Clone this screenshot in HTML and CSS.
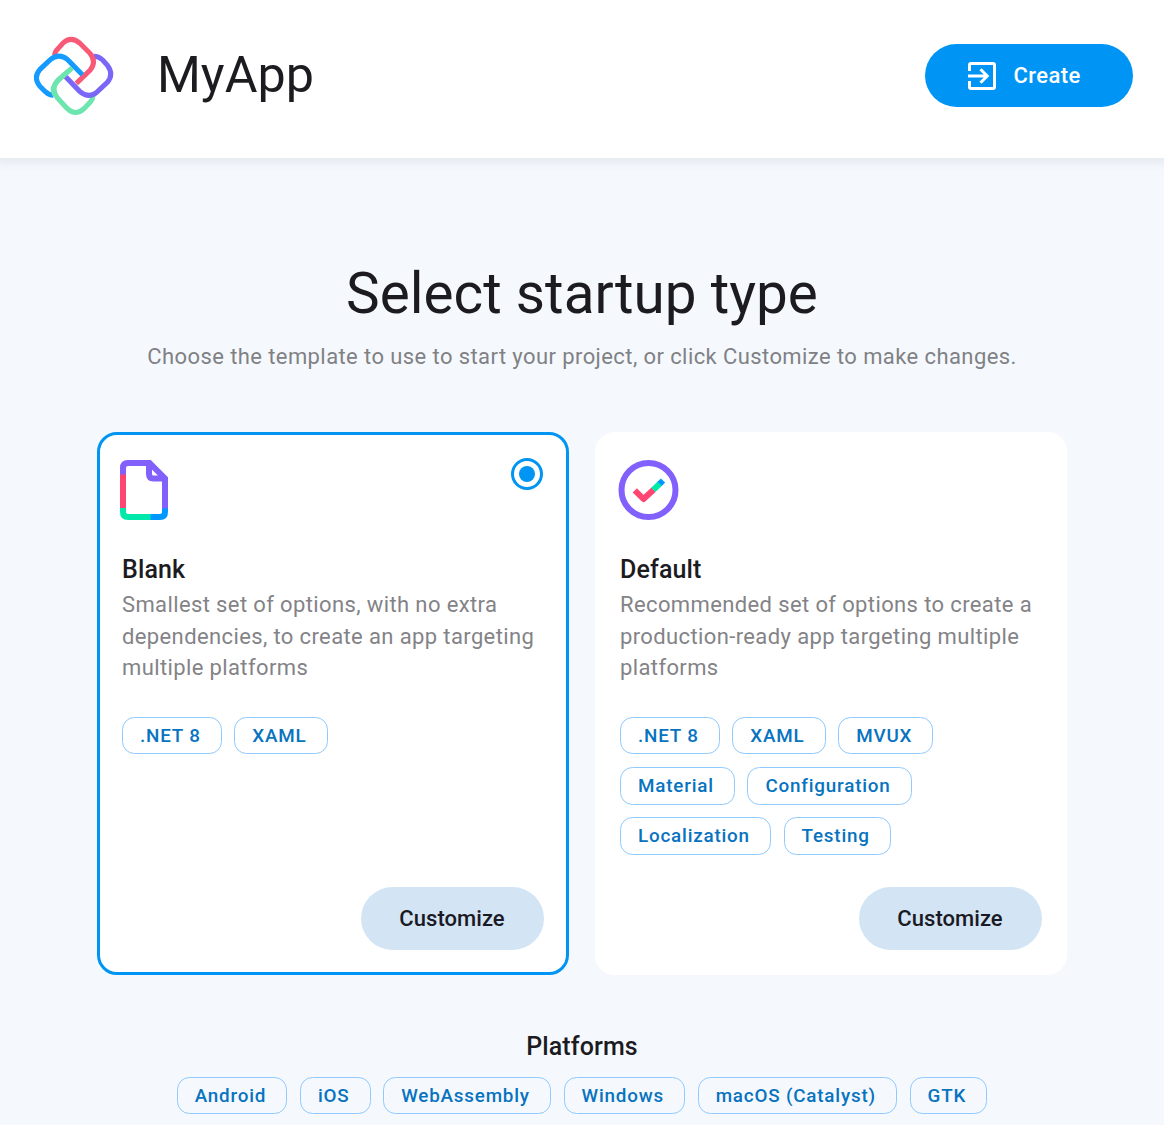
FILE: index.html
```html
<!DOCTYPE html>
<html lang="en">
<head>
<meta charset="utf-8">
<title>MyApp</title>
<link rel="stylesheet" href="styles.css">
</head>
<body>
<header class="header">
  <svg class="logo" viewBox="0 0 300 300" fill="none" stroke-width="15">
    <path stroke="#6ce5ae" d="M144 126L101 164Q80 186 99 214L130 248Q155 271 180 248L199 228Q207 218 207 210"/>
    <path stroke="#7a67f8" d="M125 152L167 196Q193 219 218 199L250 169Q270 145 251 119L236 102Q224 91 209 91"/>
    <path stroke="#f85977" d="M92 87Q92 78 103 67L117 51Q141 29 167 51L198 82Q219 107 198 133L157 172"/>
    <path stroke="#159bff" d="M175 146L131 101Q105 80 79 101L48 130Q27 154 47 180L64 197Q76 208 88 208"/>
    <path stroke="#6ce5ae" d="M144 126L101 164Q80 186 92 206"/>
  </svg>
  <h1 class="app-name">MyApp</h1>
  <button class="button create">
    <svg class="create-icon" viewBox="0 0 28 28" fill="none" stroke="#fff" stroke-width="3">
      <path d="M1.5 9V3Q1.5 1.5 3 1.5H25Q26.500 1.500 26.500 3V25Q26.500 26.500 25 26.500H3Q1.500 26.500 1.500 25V19M0 14H19M12.500 7.300L19.200 14L12.500 20.700"/>
    </svg>
    <span>Create</span>
  </button>
</header>
<main class="main">
  <h2 class="heading">Select startup type</h2>
  <p class="intro">Choose the template to use to start your project, or click Customize to make changes.</p>
  <div class="cards">
    <section class="card selected">
      <div class="card-top">
        <svg class="doc-icon" viewBox="0 0 48 60" fill="none" stroke-width="6">
          <path stroke="#8260fb" d="M3 15V8Q3 3 8 3H29.500L45 18.500V49M29 3V14Q29 18.500 33.500 18.500H45"/>
          <path stroke="#ff4672" d="M3 14.500V48.500"/>
          <path stroke="#00e9aa" d="M3 48V52Q3 57 8 57H31"/>
          <path stroke="#0098ff" d="M30.500 57H40Q45 57 45 52V48.500"/>
        </svg>
        <svg class="radio" viewBox="0 0 32 32"><circle cx="16" cy="16" r="14.500" fill="none" stroke="#0095f2" stroke-width="3"/><circle cx="16" cy="16" r="8" fill="#0095f2"/></svg>
      </div>
      <h3 class="card-title">Blank</h3>
      <p class="card-text">Smallest set of options, with no extra dependencies, to create an app targeting multiple platforms</p>
      <div class="chips">
        <span class="chip">.NET 8</span><span class="chip">XAML</span>
      </div>
      <button class="button customize">Customize</button>
    </section>
    <section class="card">
      <div class="card-top">
        <svg class="check-icon" viewBox="0 0 61 60" fill="none" stroke-width="6">
          <circle cx="30.500" cy="30" r="27" stroke="#8260fb"/>
          <path stroke="#ff4672" stroke-linejoin="round" d="M16.800 30.300L25.500 39L35.500 29.700"/>
          <path stroke="#00e9aa" d="M35.300 29.900L42 23.500"/>
          <path stroke="#0098ff" d="M41.700 23.800L45 20.500"/>
        </svg>
      </div>
      <h3 class="card-title">Default</h3>
      <p class="card-text">Recommended set of options to create a production-ready app targeting multiple platforms</p>
      <div class="chips">
        <span class="chip">.NET 8</span><span class="chip">XAML</span><span class="chip">MVUX</span><span class="chip">Material</span><span class="chip">Configuration</span><span class="chip">Localization</span><span class="chip">Testing</span>
      </div>
      <button class="button customize">Customize</button>
    </section>
  </div>
  <h3 class="platforms-title">Platforms</h3>
  <div class="chips platforms">
    <span class="chip">Android</span><span class="chip">iOS</span><span class="chip">WebAssembly</span><span class="chip">Windows</span><span class="chip">macOS (Catalyst)</span><span class="chip">GTK</span>
  </div>
</main>
</body>
</html>
```
FILE: styles.css
```css
* { box-sizing: border-box; }
body {
  margin: 0;
  height: 1125px;
  overflow: hidden;
  background: #f5f9fe;
  color: #1c1b1f;
  font-family: Roboto, sans-serif;
}
h1, h2, h3, p { margin: 0; }
svg { display: block; flex: none; }
.header {
  position: relative;
  display: flex;
  height: 158px;
  padding: 26px 31px 0 24px;
  background: #fff;
  box-shadow: 0 2px 8px 4px rgba(40, 50, 65, .07);
}
.logo { width: 100px; height: 100px; }
.app-name {
  margin-left: 33px;
  font-size: 50.250px;
  line-height: 98px;
  font-weight: 400;
}
.button {
  display: flex;
  align-items: center;
  height: 63px;
  border: 0;
  border-radius: 32px;
  font-family: inherit;
  font-size: 22px;
  font-weight: 500;
}
.create {
  width: 208px;
  margin: 18px 0 0 auto;
  padding: 0 0 0 43px;
  gap: 17.600px;
  background: #0095f5;
  color: #fff;
  letter-spacing: .400px;
}
.create-icon { width: 28px; height: 28px; }
.main { padding-top: 102px; }
.heading {
  font-size: 56.600px;
  line-height: 67px;
  font-weight: 400;
  letter-spacing: .03px;
  text-align: center;
}
.intro {
  margin-top: 14px;
  font-size: 22px;
  line-height: 31px;
  letter-spacing: .410px;
  text-align: center;
  color: #808184;
}
.cards {
  display: grid;
  grid-template-columns: 472px 472px;
  justify-content: center;
  gap: 26px;
  margin-top: 60px;
}
.card {
  display: flex;
  flex-direction: column;
  height: 543px;
  padding: 22px;
  border: 3px solid #fff;
  border-radius: 20px;
  background: #fff;
}
.selected { border-color: #0095f2; }
.card-top {
  display: flex;
  justify-content: space-between;
  height: 94px;
}
.doc-icon { width: 48px; height: 60px; margin: 3px 0 0 -1.700px; }
.check-icon { width: 61px; height: 60px; margin: 3px 0 0 -2px; }
.radio { width: 32px; height: 32px; margin: 1px 1px 0 0; }
.card-title, .platforms-title {
  font-size: 25px;
  line-height: 37px;
  font-weight: 500;
  letter-spacing: .12px;
}
.card-text {
  margin-top: 1.200px;
  font-size: 22px;
  line-height: 31.400px;
  letter-spacing: .380px;
  color: #838387;
}
.chips {
  display: flex;
  flex-wrap: wrap;
  gap: 12.800px 12.500px;
}
.card .chips { margin-top: 33.300px; padding-right: 40px; }
.chip {
  height: 37.500px;
  padding: 0 20.200px 0 17px;
  border: 1px solid #90caff;
  border-radius: 12.500px;
  font-size: 18.840px;
  line-height: 36.400px;
  font-weight: 500;
  letter-spacing: .8px;
  color: #0873bf;
  white-space: nowrap;
}
.customize {
  justify-content: center;
  width: 183px;
  margin: auto 0 0 auto;
  padding: 0 1px 0 0;
  background: #d3e4f5;
  color: #1a1a24;
  letter-spacing: .05px;
}
.platforms-title { margin-top: 53px; text-align: center; }
.platforms { justify-content: center; margin-top: 11.800px; }
.platforms .chip { height: 37.200px; }
```
